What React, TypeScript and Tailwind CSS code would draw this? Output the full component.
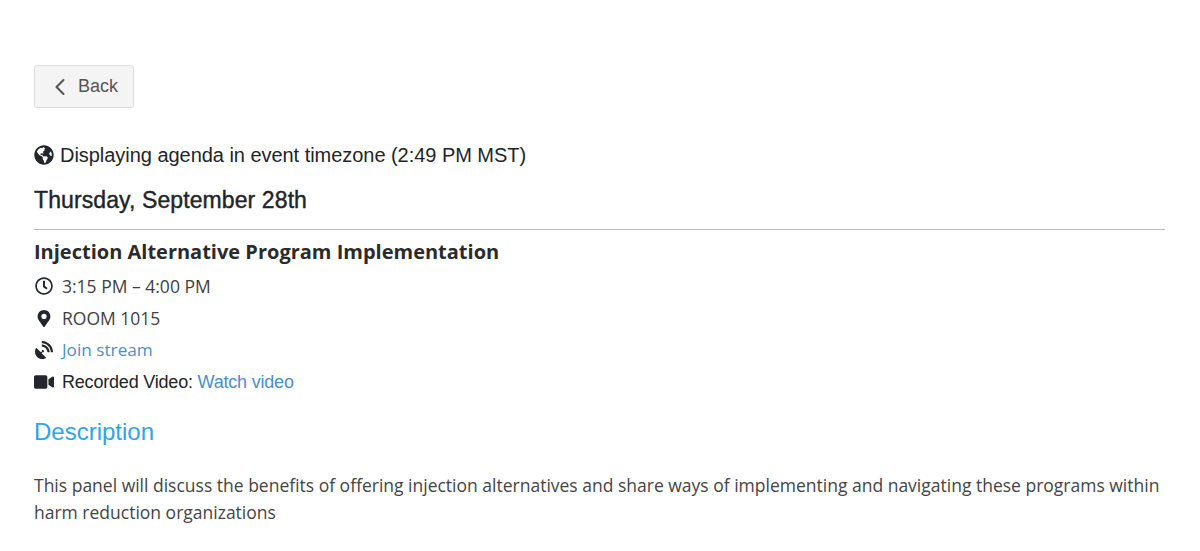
import { FaGlobeAmericas, FaRegClock, FaMapMarkerAlt, FaSatelliteDish, FaVideo } from "react-icons/fa";
import { ChevronLeft } from "lucide-react";

const sans = "font-['Liberation_Sans',Arial,sans-serif]";
const open = "font-['Open_Sans','Noto_Sans',sans-serif]";

export default function App() {
  return (
    <div className={`min-h-[551px] bg-white pl-[34px] pr-[35px] pt-[65px] ${sans} text-[#212529]`}>
      <button className="flex h-[43px] w-[100px] items-center rounded-[3px] border border-[#dcdcdc] bg-[#f4f4f4] pl-[11px] text-[18px] text-[#555]">
        <ChevronLeft size={28} strokeWidth={1.8} className="mr-[4px]" />
        Back
      </button>
      <div className="mt-[35px] flex h-[24px] items-center text-[20px] tracking-[-0.04px] text-[#212529]">
        <FaGlobeAmericas size={20} className="mr-[6px] text-[#23272b]" />
        Displaying agenda in event timezone (2:49 PM MST)
      </div>
      <h2 className="mt-[20px] h-[26px] text-[23px] leading-[26px] tracking-[0.1px] font-normal [-webkit-text-stroke:0.4px_#212529]">Thursday, September 28th</h2>
      <div className="mt-[16px] border-t border-[#bdbdbd]" />
      <h3 className={`mt-[8px] h-[28px] ${open} text-[20px] leading-[28px] font-bold text-[#2b2b2b]`}>Injection Alternative Program Implementation</h3>
      <div className={`mt-[4px] flex h-[32px] items-center ${open} text-[17.5px] text-[#3f3f3f]`}>
        <FaRegClock size={18} className="mr-[9px] ml-px text-[#23272b]" />
        3:15 PM – 4:00 PM
      </div>
      <div className={`flex h-[32px] items-center ${open} text-[17.5px] text-[#3f3f3f]`}>
        <FaMapMarkerAlt size={17} className="mr-[10px] ml-[2px] w-[16px] text-[#23272b]" />
        ROOM 1015
      </div>
      <div className={`flex h-[32px] items-center ${open} text-[17.2px] text-[#4a8fc7]`}>
        <FaSatelliteDish size={18} className="mr-[9px] ml-px text-[#23272b]" />
        Join stream
      </div>
      <div className="flex h-[32px] items-center text-[18px] tracking-[-0.2px] text-[#212529]">
        <FaVideo size={20} className="mr-[8px] text-[#23272b]" />
        Recorded Video:&nbsp;<span className="text-[#4a8fc7]">Watch video</span>
      </div>
      <h4 className="mt-[19px] h-[30px] text-[24px] leading-[30px] text-[#2fa4e7]">Description</h4>
      <p className={`mt-[25px] ${open} text-[17.5px] leading-[27px] text-[#444]`}>
        This panel will discuss the benefits of offering injection alternatives and share ways of implementing and navigating these programs within harm reduction organizations
      </p>
    </div>
  );
}
